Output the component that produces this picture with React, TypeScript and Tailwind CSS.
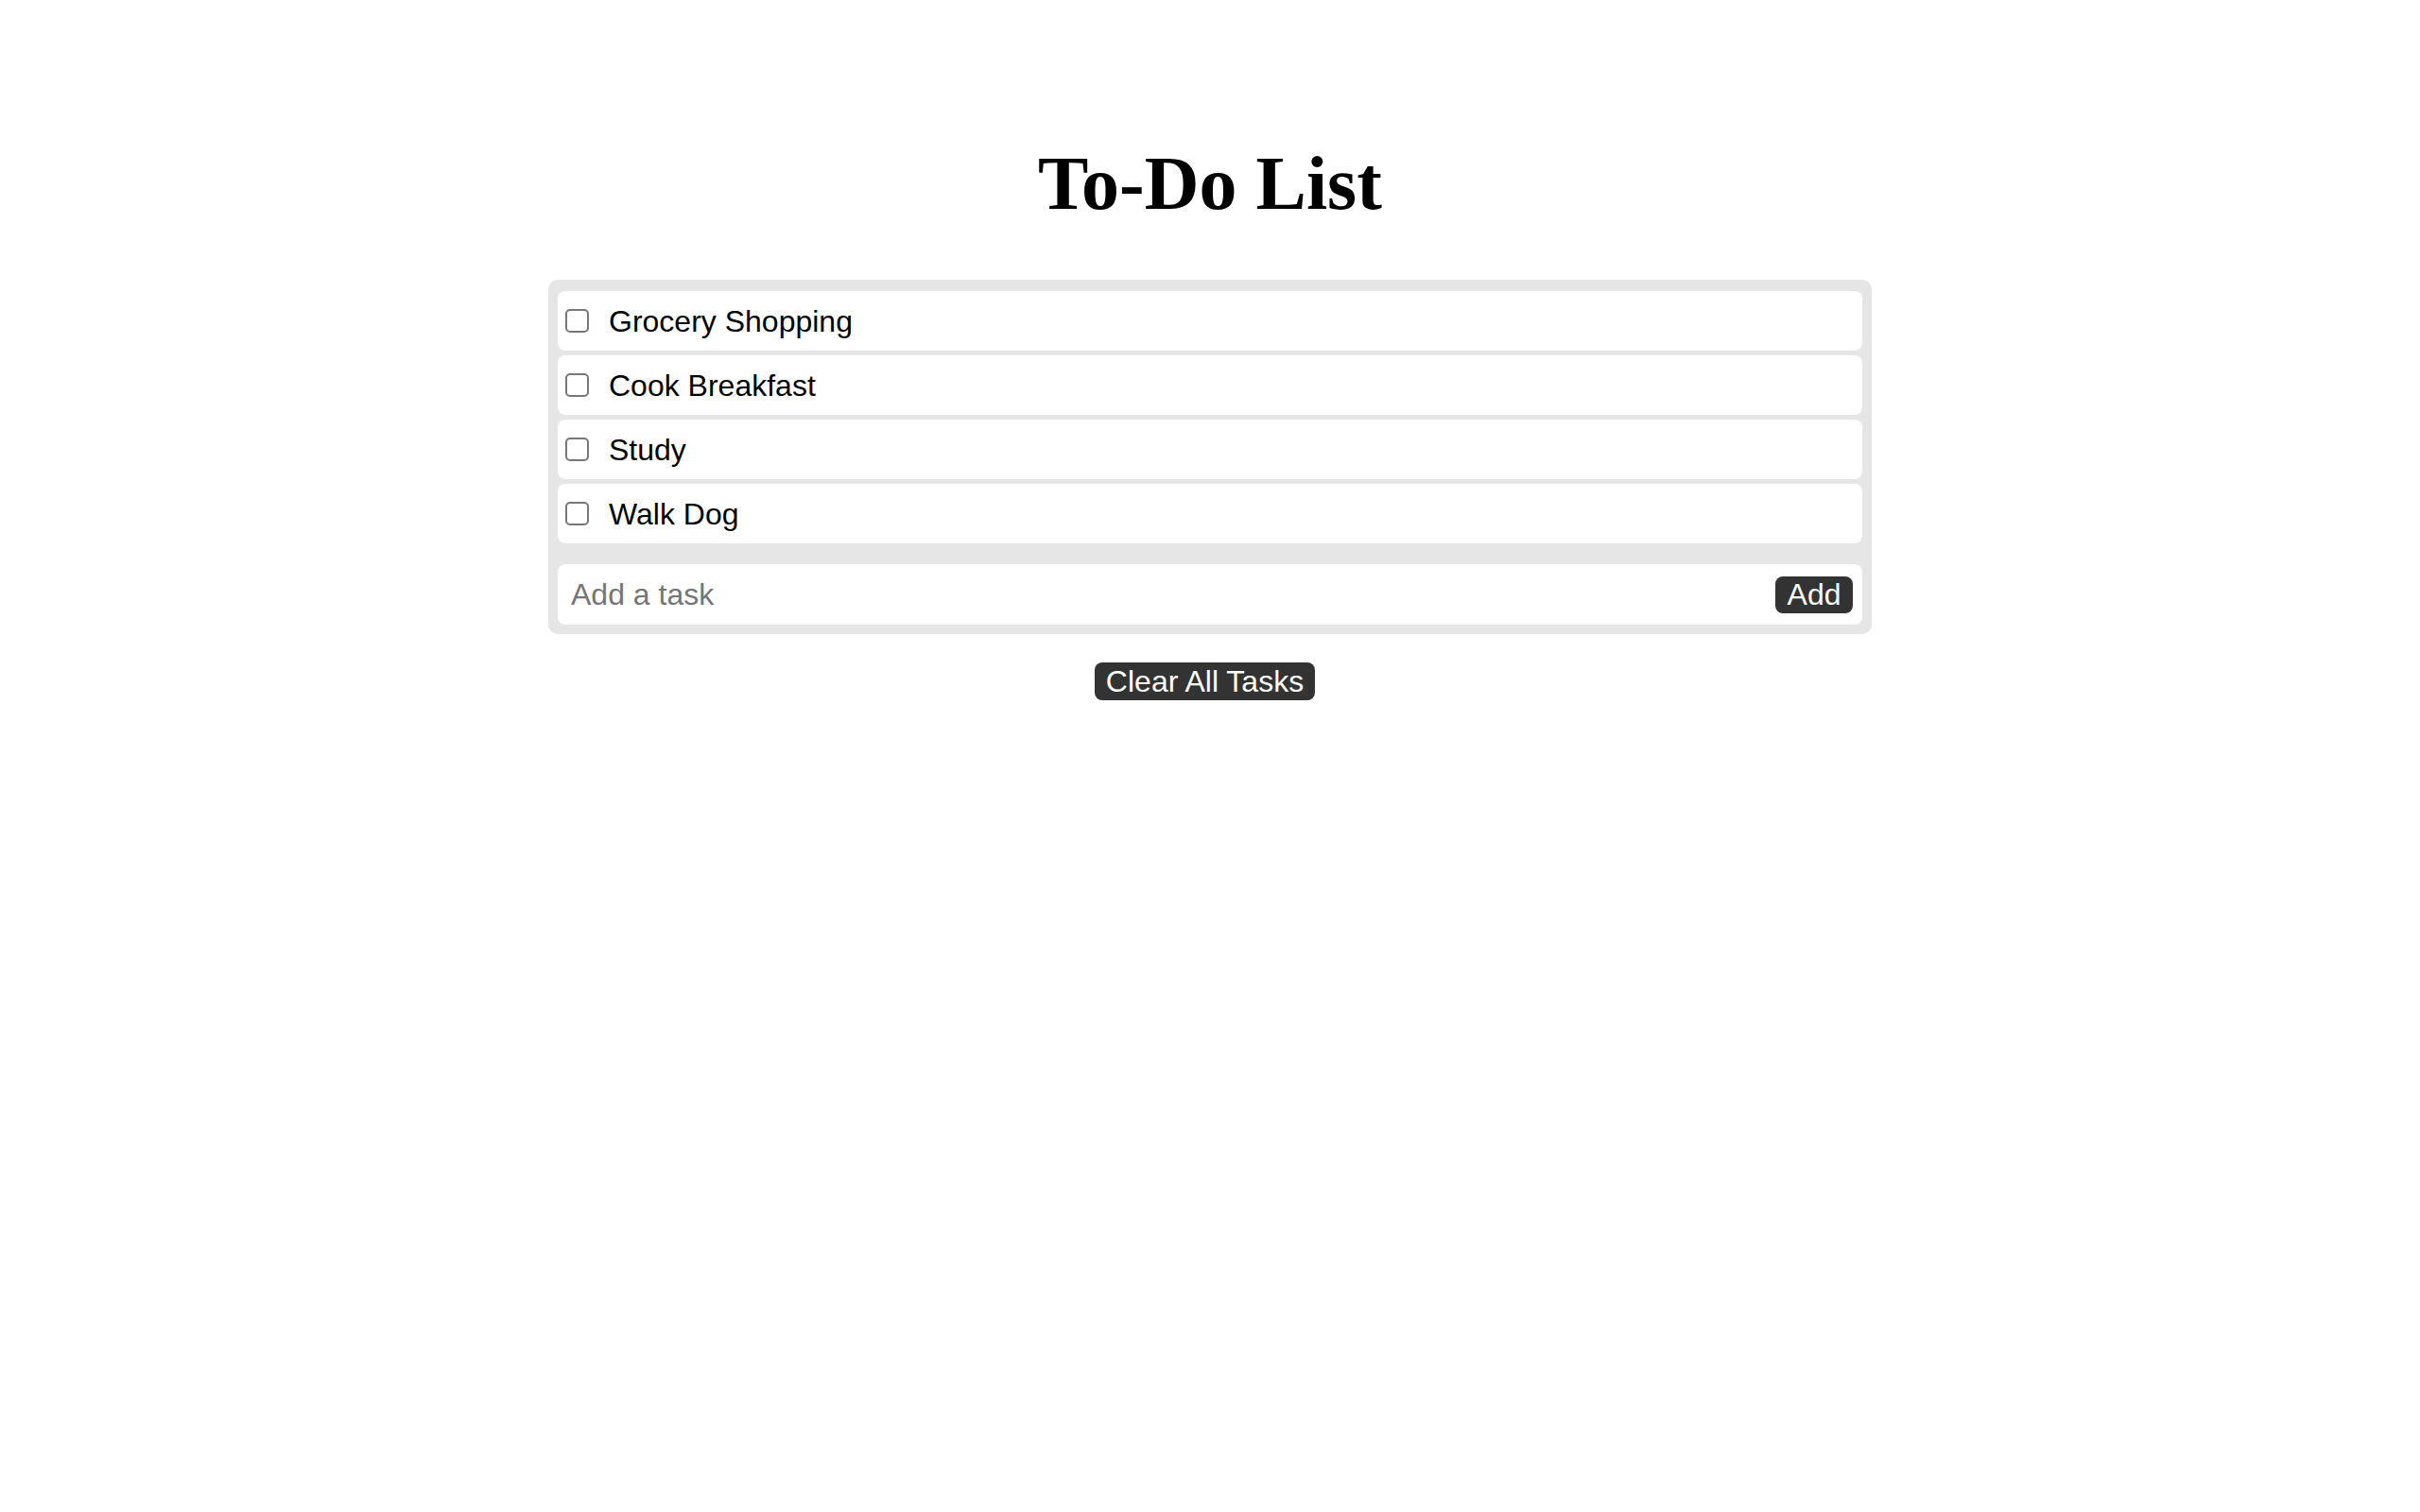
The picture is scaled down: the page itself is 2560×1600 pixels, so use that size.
import { useState } from 'react'

const START = ['Grocery Shopping', 'Cook Breakfast', 'Study', 'Walk Dog']

export default function App() {
  const [tasks, setTasks] = useState(START.map(t => ({ text: t, done: false })))
  const [draft, setDraft] = useState('')

  const add = () => {
    if (!draft.trim()) return
    setTasks([...tasks, { text: draft.trim(), done: false }])
    setDraft('')
  }

  return (
    <div className="min-h-screen bg-white pt-[154px] font-['Liberation_Sans',Arial,sans-serif] text-black">
      <h1 className="text-center font-['Liberation_Serif','Times_New_Roman',serif] text-[80px] font-bold leading-none">
        To-Do List
      </h1>

      {/* Panel */}
      <div className="mx-auto mt-[62px] w-[1400px] rounded-[10px] bg-[#e6e6e6] px-[10px] pb-[10px] pt-[12px]">
        <ul className="flex flex-col gap-[5px]">
          {tasks.map((t, i) => (
            <li key={i} className="flex h-[63px] items-center gap-[21px] rounded-[8px] bg-white pl-[8px]">
              <input
                type="checkbox"
                checked={t.done}
                onChange={() => setTasks(tasks.map((x, j) => (j === i ? { ...x, done: !x.done } : x)))}
                className="h-[25px] w-[25px] shrink-0 appearance-none rounded-[5px] border-2 border-[#777] bg-white checked:bg-[#333]"
              />
              <span className={`text-[32px] leading-none ${t.done ? 'line-through' : ''}`}>{t.text}</span>
            </li>
          ))}
        </ul>

        {/* Add row */}
        <div className="mt-[22px] flex h-[64px] items-center rounded-[8px] bg-white pl-[14px] pr-[10px]">
          <input
            value={draft}
            onChange={e => setDraft(e.target.value)}
            onKeyDown={e => e.key === 'Enter' && add()}
            placeholder="Add a task"
            className="min-w-0 flex-1 bg-transparent text-[32px] leading-none outline-none placeholder:text-[#757575]"
          />
          <button
            onClick={add}
            className="flex h-[39px] w-[82px] items-center justify-center rounded-[8px] bg-[#333] text-[32px] leading-none text-white"
          >
            Add
          </button>
        </div>
      </div>

      <div className="mt-[30px] flex justify-center pr-[11px]">
        <button
          onClick={() => setTasks([])}
          className="flex h-[40px] w-[233px] items-center justify-center rounded-[8px] bg-[#333] text-[32px] leading-none text-white"
        >
          Clear All Tasks
        </button>
      </div>
    </div>
  )
}
